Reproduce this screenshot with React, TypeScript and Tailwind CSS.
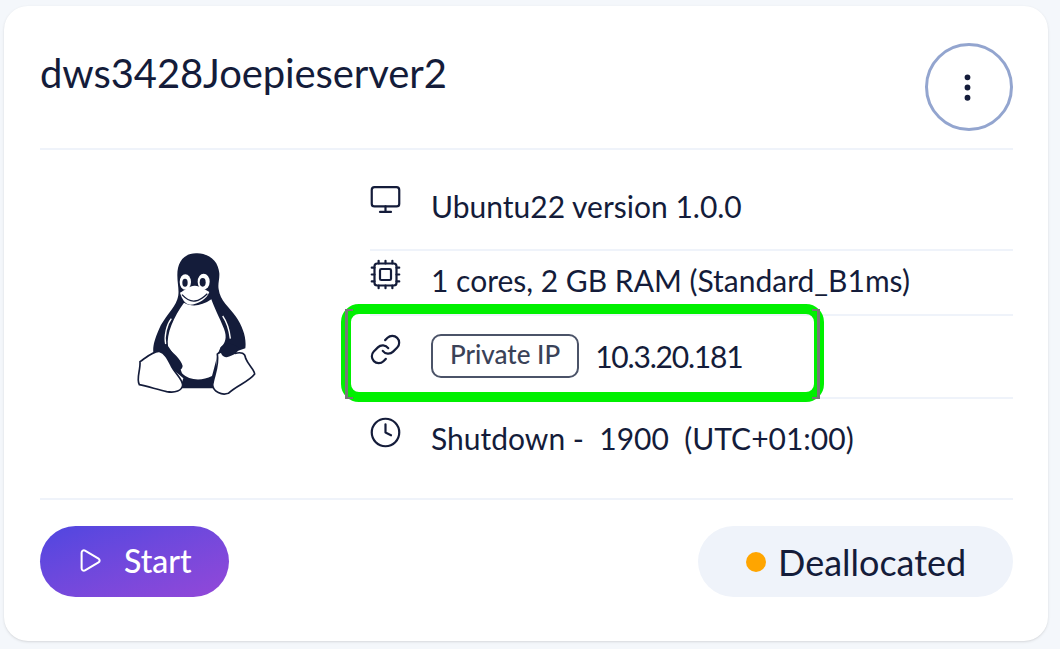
import { Monitor, Cpu, Link, Clock, Play, EllipsisVertical } from "lucide-react";

function Tux() {
  return (
    <svg viewBox="0 0 540 540" className="w-[180px] h-[180px]">
      {/* body */}
      <path
        d="M292 70C250 68 232 98 232 135C232 165 240 185 232 208C222 238 192 262 176 300C164 328 158 348 160 368L250 445L240 475L345 475L350 385L436 355C440 322 428 290 408 260C388 232 360 212 356 178C353 160 359 150 358 130C355 95 332 72 292 70Z"
        fill="#141c3a"
      />
      {/* belly */}
      <path
        d="M252 218C275 232 305 228 334 208C342 232 358 262 372 296C382 322 376 340 362 352C350 375 345 410 336 438C305 454 268 452 246 430C236 398 222 372 204 348C198 312 222 258 252 218Z"
        fill="#fff"
      />
      {/* arm highlights */}
      <path d="M214 266C200 284 192 318 197 342" fill="none" stroke="#fff" strokeWidth="4" />
      <path d="M368 258C380 275 388 300 391 326" fill="none" stroke="#fff" strokeWidth="4" />
      <path d="M200 350C218 368 242 385 248 408C246 424 232 422 225 414L198 368Z" fill="#141c3a" />
      {/* eyes */}
      <ellipse cx="256" cy="156" rx="17" ry="23" fill="#fff" />
      <ellipse cx="311" cy="155" rx="18" ry="24" fill="#fff" />
      <ellipse cx="255" cy="158" rx="8" ry="12" fill="#141c3a" />
      <ellipse cx="308" cy="157" rx="9" ry="13" fill="#141c3a" />
      {/* beak */}
      <path
        d="M240 188C255 180 270 166 285 167C300 168 315 178 328 186C322 205 295 224 270 224C255 222 245 205 240 188Z"
        fill="#fff"
      />
      <path d="M246 194C258 207 270 215 285 213C300 211 312 201 322 191" fill="none" stroke="#141c3a" strokeWidth="4" />
      {/* feet */}
      <path
        d="M120 395C135 385 160 362 178 364C195 368 205 390 215 410C225 430 246 445 248 465C246 482 226 490 200 485C170 478 140 468 118 464C108 445 122 420 120 395Z"
        fill="#fff"
        stroke="#141c3a"
        strokeWidth="5"
      />
      <path
        d="M352 372C365 360 385 362 405 370C425 365 435 370 437 385C445 405 464 420 464 432C447 455 412 465 385 490C365 497 340 485 338 465C340 440 358 410 352 372Z"
        fill="#fff"
        stroke="#141c3a"
        strokeWidth="5"
      />
      <path d="M362 352C375 338 395 338 415 352C422 362 400 378 380 382C365 382 358 365 362 352Z" fill="#141c3a" />
    </svg>
  );
}

function InfoRow({ icon: Icon, iconClass, height, top, border = true, children }: any) {
  return (
    <div
      className={`flex items-start ${border ? "border-b-2 border-[#eff3fa]" : ""} ${height} ${top}`}
    >
      <div className="w-[62px] shrink-0">
        <Icon size={33} strokeWidth={1.6} className={`text-[#141c3a] -ml-[1px] ${iconClass}`} />
      </div>
      <div className="-ml-[1px] flex items-center text-[30px] leading-[36px] whitespace-pre">{children}</div>
    </div>
  );
}

export default function App() {
  return (
    <div
      className="w-[1060px] h-[649px] bg-[#f4f7fb] pt-[6px] pl-1 overflow-hidden text-[#141c3a]"
      style={{ fontFamily: '"Lato", "Noto Sans", sans-serif' }}
    >
      <div className="relative w-[1044px] h-[635px] bg-white rounded-[24px] shadow-sm pl-9 pr-[35px] flex flex-col">
        {/* HEADER */}
        <div className="h-[144px] shrink-0 border-b-2 border-[#eff3fa] flex items-start justify-between">
          <h1 className="text-[40px] leading-[46px] mt-[44px] tracking-[-0.1px]">dws3428Joepieserver2</h1>
          <button className="mt-[37px] w-[88px] h-[88px] rounded-full border-[3px] border-[#93a5cf] flex items-center justify-center bg-white">
            <EllipsisVertical size={35} strokeWidth={2} className="mr-[3px]" />
          </button>
        </div>

        {/* BODY */}
        <div className="h-[350px] shrink-0 border-b-2 border-[#eff3fa] flex">
          <div className="w-[330px] shrink-0 pt-[80px] pl-[60px]">
            <Tux />
          </div>
          <div className="flex-1 flex flex-col">
            <InfoRow icon={Monitor} iconClass="-mt-[5px]" height="h-[101px]" top="pt-[38px]">
              Ubuntu22 version 1.0.0
            </InfoRow>
            <InfoRow icon={Cpu} iconClass="-mt-[4px]" height="h-[66px]" top="pt-[11px]">
              1 cores, 2 GB RAM (Standard_B1ms)
            </InfoRow>
            <InfoRow icon={Link} iconClass="-mt-[1px]" height="h-[83px]" top="pt-[18px]">
              <span className="border-2 border-[#4b5368] rounded-[10px] text-[26px] font-medium leading-[37px] px-[17px] mr-4 h-[44px] text-[#3a4258]">
                Private IP
              </span>
              <span className="tracking-[-1.2px]">10.3.20.181</span>
            </InfoRow>
            <InfoRow icon={Clock} iconClass="-mt-[4px]" height="h-[100px]" top="pt-[21px]" border={false}>
              Shutdown -  1900  (UTC+01:00)
            </InfoRow>
          </div>
        </div>

        {/* FOOTER */}
        <div className="flex items-center justify-between pt-[26px]">
          <button className="w-[189px] h-[71px] rounded-full bg-gradient-to-br from-[#4f46e0] to-[#9347d8] text-white flex items-center pl-[38px] gap-[21px] text-[32px] font-medium">
            <Play size={27} strokeWidth={1.8} className="-ml-[2px] -mt-[2px]" />
            <span className="-mt-[2px]">Start</span>
          </button>
          <div className="w-[315px] h-[71px] rounded-full bg-[#eff3fa] flex items-center pl-[48px] gap-[12px] text-[36px]">
            <span className="w-5 h-5 rounded-full bg-[#ffa500]" />
            Deallocated
          </div>
        </div>

        {/* HIGHLIGHT */}
        <div className="absolute left-[337px] top-[298px] w-[483px] h-[98px] rounded-[18px] border-[10px] border-[#00f000]" />
        <div className="absolute left-[341px] top-[303px] w-[475px] h-[90px] border-x-[3px] border-[#777777] flex justify-between">
          <div className="w-[5px] h-[2px] bg-[#777777]" />
          <div className="w-[5px] h-[2px] bg-[#777777]" />
        </div>
        <div className="absolute left-[341px] top-[391px] w-[475px] h-[2px] flex justify-between">
          <div className="w-[8px] bg-[#777777]" />
          <div className="w-[8px] bg-[#777777]" />
        </div>
      </div>
    </div>
  );
}
